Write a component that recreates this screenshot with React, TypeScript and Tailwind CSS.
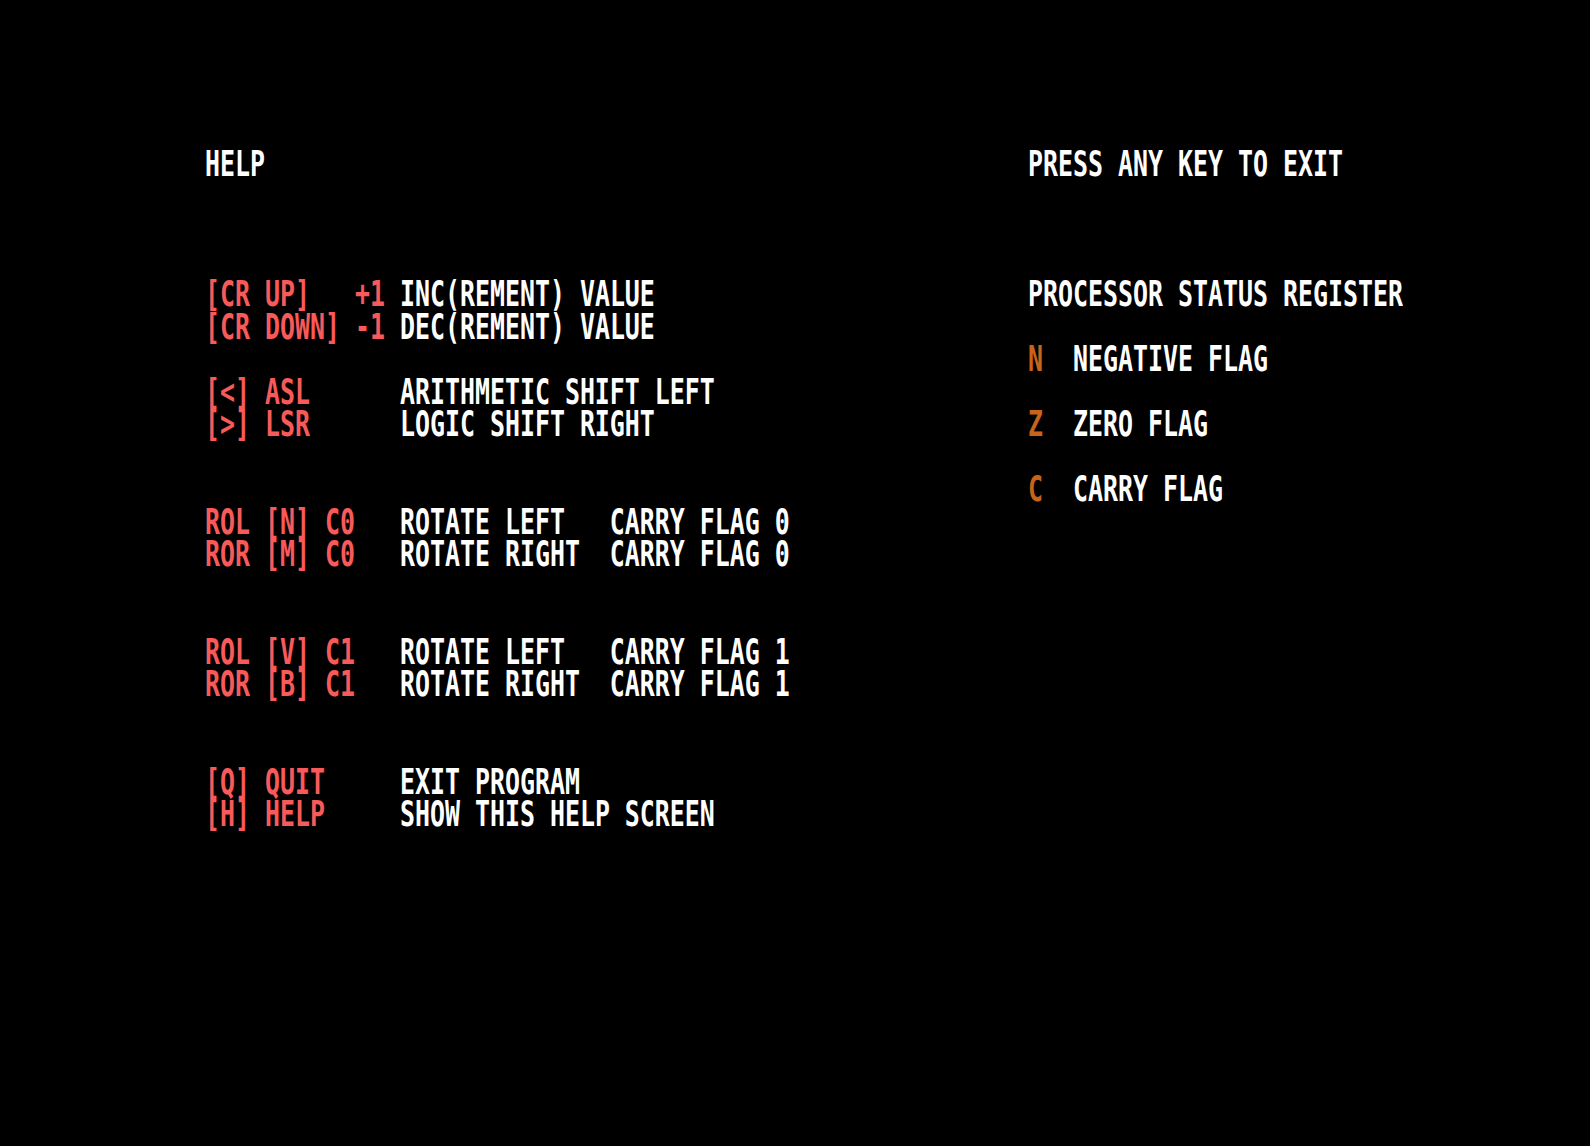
import React from "react";

type Seg = [string, "r" | "w" | "o"];
type Line = Seg[] | null;

const left: Line[] = [
  [["HELP", "w"]],
  null,
  null,
  null,
  [["[CR UP]   +1", "r"], [" INC(REMENT) VALUE", "w"]],
  [["[CR DOWN] -1", "r"], [" DEC(REMENT) VALUE", "w"]],
  null,
  [["[<] ASL", "r"], ["      ARITHMETIC SHIFT LEFT", "w"]],
  [["[>] LSR", "r"], ["      LOGIC SHIFT RIGHT", "w"]],
  null,
  null,
  [["ROL [N] C0", "r"], ["   ROTATE LEFT   CARRY FLAG 0", "w"]],
  [["ROR [M] C0", "r"], ["   ROTATE RIGHT  CARRY FLAG 0", "w"]],
  null,
  null,
  [["ROL [V] C1", "r"], ["   ROTATE LEFT   CARRY FLAG 1", "w"]],
  [["ROR [B] C1", "r"], ["   ROTATE RIGHT  CARRY FLAG 1", "w"]],
  null,
  null,
  [["[Q] QUIT", "r"], ["     EXIT PROGRAM", "w"]],
  [["[H] HELP", "r"], ["     SHOW THIS HELP SCREEN", "w"]],
];

const right: Line[] = [
  [["PRESS ANY KEY TO EXIT", "w"]],
  null,
  null,
  null,
  [["PROCESSOR STATUS REGISTER", "w"]],
  null,
  [["N", "o"], ["  NEGATIVE FLAG", "w"]],
  null,
  [["Z", "o"], ["  ZERO FLAG", "w"]],
  null,
  [["C", "o"], ["  CARRY FLAG", "w"]],
];

function colorClass(c: Seg[1]) {
  if (c === "r") return "text-[#f85a5a]";
  if (c === "o") return "text-[#c8641a]";
  return "text-white";
}

function Row({ line }: { line: Line }) {
  return (
    <div className="h-[32.5px] flex items-center whitespace-pre">
      {line && (
        <span className="block h-[22.7px] leading-[22.7px] scale-y-[1.43]">
          {line.map(([t, c], i) => (
            <span key={i} className={colorClass(c)}>
              {t}
            </span>
          ))}
        </span>
      )}
    </div>
  );
}

export default function App() {
  return (
    <div
      className="w-[1590px] h-[1146px] bg-black flex pl-[205px] pt-[149.5px] text-[24.915px] font-bold overflow-hidden"
      style={{ fontFamily: '"DejaVu Sans Mono", "Liberation Mono", monospace' }}
    >
      <div className="w-[823px] shrink-0 flex flex-col">
        {left.map((l, i) => (
          <Row key={i} line={l} />
        ))}
      </div>
      <div className="flex flex-col">
        {right.map((l, i) => (
          <Row key={i} line={l} />
        ))}
      </div>
    </div>
  );
}
